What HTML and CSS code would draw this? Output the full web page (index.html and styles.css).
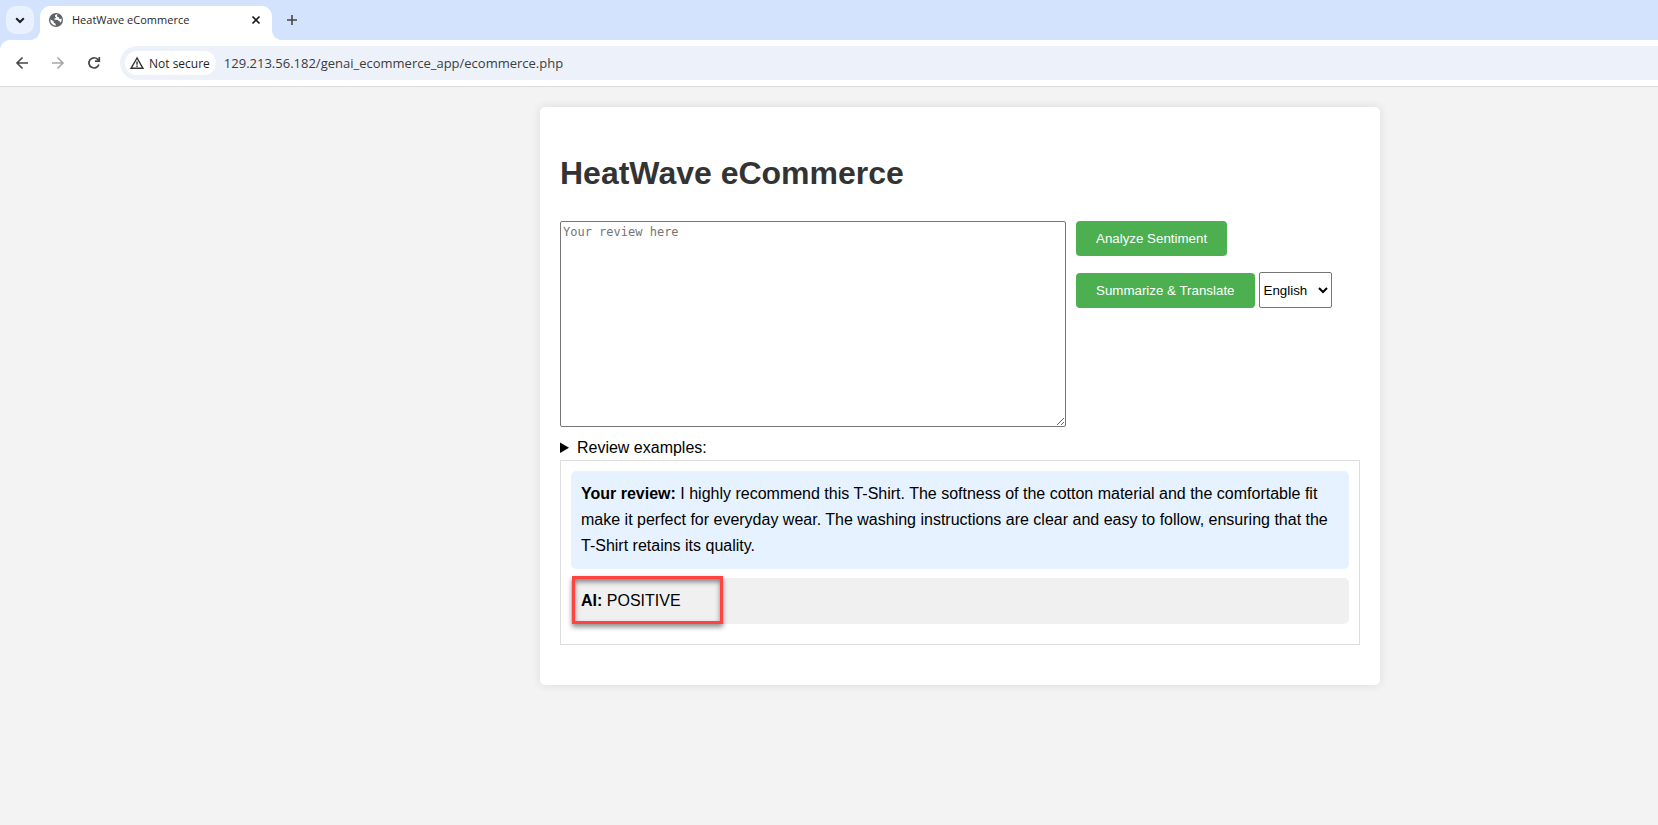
FILE: index.html
```html
<!DOCTYPE html>
<html lang="en">
<head>
<meta charset="utf-8">
<title>HeatWave eCommerce</title>
<link rel="stylesheet" href="styles.css">
</head>
<body>
<header class="browser">
  <div class="tabstrip">
    <button class="tab-search" type="button" aria-label="Search tabs">
      <svg width="10" height="10" viewBox="0 0 10 10" fill="none" stroke="#1f1f1f" stroke-width="2"><path d="M1.2 3.2 5 7l3.800-3.800"/></svg>
    </button>
    <div class="tab">
      <svg class="tab-icon" width="16" height="16" viewBox="0 0 16 16"><circle cx="8" cy="8" r="7" fill="#5f6368"/><path fill="#fff" d="M9.300 2.300c-2 .2-2.500 1-2.300 1.900.2.700 1 .7.900 1.500-.1.700-1.100.5-1.600 1-.3.400 0 .9.700 1h2.200c1 .1 1.100.9 1.700 1.500.5.400 1.200.2 1.500.7.200.6-.5 1.500-1.300 2.400A5.700 5.700 0 0 0 13.700 8c0-.5-.1-1-.2-1.400-.6.500-1.300.6-2 .2-.7-.5-.4-1.200-1-1.700-.500-.3-1.300-.2-1.500-.9-.1-.700.5-1.100.3-1.900zM2.400 7.200A5.700 5.700 0 0 0 7.500 13.700c.4-.5.400-1.300 0-1.900-.4-.5-1.300-.4-1.600-1-.3-.6 0-1.100-.5-1.700-.7-.900-1.900-.8-3-1.900z"/></svg>
      <span class="tab-title">HeatWave eCommerce</span>
      <button class="icon-button" type="button" aria-label="Close tab">
        <svg width="10" height="10" viewBox="0 0 10 10" stroke="#1f1f1f" stroke-width="1.700"><path d="m1.500 1.500 7 7m0-7-7 7"/></svg>
      </button>
    </div>
    <button class="icon-button new-tab" type="button" aria-label="New tab">
      <svg width="12" height="12" viewBox="0 0 12 12" stroke="#474747" stroke-width="1.600"><path d="M6 1v10M1 6h10"/></svg>
    </button>
  </div>
  <div class="toolbar">
    <nav class="nav">
      <button class="icon-button" type="button" aria-label="Back">
        <svg width="14" height="14" viewBox="0 0 14 14" fill="none" stroke="#474747" stroke-width="1.600"><path d="M13 7H2m5.500-5.500L2 7l5.500 5.500"/></svg>
      </button>
      <button class="icon-button" type="button" aria-label="Forward" disabled>
        <svg width="14" height="14" viewBox="0 0 14 14" fill="none" stroke="#a8a8a8" stroke-width="1.600"><path d="M1 7h11M6.500 1.500 12 7l-5.500 5.500"/></svg>
      </button>
      <button class="icon-button" type="button" aria-label="Reload">
        <svg width="14" height="14" viewBox="0 0 14 14" fill="none" stroke="#474747" stroke-width="1.700"><path d="M11.900 8.500A5.100 5.100 0 1 1 10.800 3.400L12.300 5"/><path d="M12.300 1v4.200H8"/></svg>
      </button>
    </nav>
    <div class="omnibox">
      <button class="security" type="button">
        <svg width="14" height="14" viewBox="0 0 14 14" fill="none" stroke="#333" stroke-width="1.400"><path d="M7 2 1 12.300h12z"/><path d="M7 5.500v3.300M7 9.600V11"/></svg>
        Not secure
      </button>
      <input class="url" type="text" aria-label="Address" value="129.213.56.182/genai_ecommerce_app/ecommerce.php">
    </div>
  </div>
</header>
<main class="page">
  <section class="card">
    <h1 class="title">HeatWave eCommerce</h1>
    <form class="review-form">
      <textarea class="review" aria-label="Your review" placeholder="Your review here"></textarea>
      <div class="actions">
        <button class="action" type="button">Analyze Sentiment</button>
        <div class="translate">
          <button class="action" type="button">Summarize &amp; Translate</button>
          <select class="language" aria-label="Language"><option>English</option></select>
        </div>
      </div>
    </form>
    <details class="examples">
      <summary>Review examples:</summary>
    </details>
    <div class="chat">
      <p class="message message-user"><strong>Your review:</strong> I highly recommend this T-Shirt. The softness of the cotton material and the comfortable fit make it perfect for everyday wear. The washing instructions are clear and easy to follow, ensuring that the T-Shirt retains its quality.</p>
      <p class="message message-ai"><strong>AI:</strong> POSITIVE<span class="highlight"></span></p>
    </div>
  </section>
</main>
</body>
</html>
```
FILE: styles.css
```css
* { box-sizing: border-box; }

body {
  margin: 0;
  min-height: 100vh;
  background: #f3f3f3;
  color: #000;
  font: 16px/26px "Liberation Sans", Arial, sans-serif;
}

button, input, select, textarea { margin: 0; font-family: inherit; }
svg { display: block; flex: none; }

/* Browser frame */
.browser {
  background: #d3e3fd;
  border-bottom: 1px solid #dcdcdc;
  font-family: "Open Sans", "Noto Sans", sans-serif;
}

.tabstrip {
  display: flex;
  align-items: center;
  height: 40px;
  padding: 6px 6px 0;
}

.tab-search {
  display: grid;
  place-items: center;
  align-self: flex-start;
  width: 28px;
  height: 28px;
  margin-right: 6px;
  padding: 0;
  border: 0;
  border-radius: 10px;
  background: #e9f1fe;
}

.tab {
  position: relative;
  display: flex;
  align-items: center;
  gap: 8px;
  width: 232px;
  height: 34px;
  padding: 0 6px 6px 8px;
  border-radius: 10px 10px 0 0;
  background: #fff;
}

/* Concave feet that join the active tab to the toolbar */
.tab::before,
.tab::after {
  content: "";
  position: absolute;
  bottom: 0;
  width: 10px;
  height: 10px;
}
.tab::before { right: 100%; background: radial-gradient(circle at 0 0, transparent 10px, #fff 10px); }
.tab::after { left: 100%; background: radial-gradient(circle at 100% 0, transparent 10px, #fff 10px); }

.tab-title {
  flex: 1;
  color: #1f1f1f;
  font-size: 11px;
  line-height: 16px;
  white-space: nowrap;
}

.icon-button {
  display: grid;
  place-items: center;
  width: 20px;
  height: 20px;
  padding: 0;
  border: 0;
  background: none;
}

.new-tab { margin: 0 0 6px 10px; }

.toolbar {
  display: flex;
  align-items: center;
  gap: 16px;
  height: 46px;
  padding-left: 12px;
  border-radius: 10px 0 0 0;
  background: #fff;
}

.nav { display: flex; gap: 16px; }

.omnibox {
  display: flex;
  flex: 1;
  align-items: center;
  gap: 8px;
  height: 34px;
  padding-left: 5px;
  border-radius: 17px 0 0 17px;
  background: #edf1fa;
}

.security {
  display: flex;
  align-items: center;
  gap: 5px;
  height: 24px;
  padding: 0 6px 0 5px;
  border: 0;
  border-radius: 12px;
  background: #fff;
  color: #1f1f1f;
  font-size: 12px;
  font-weight: 500;
  white-space: nowrap;
}

.url {
  flex: 1;
  min-width: 0;
  padding: 0;
  border: 0;
  background: none;
  color: #3c3c3c;
  font-size: 13px;
}

/* Page */
.page {
  display: grid;
  grid-template-columns: minmax(0, 540fr) minmax(0, 840px) minmax(0, 278fr);
  padding: 20px 0;
}

.card {
  grid-column: 2;
  padding: 20px 20px 40px;
  border-radius: 5px;
  background: #fff;
  box-shadow: 0 0 10px rgba(0, 0, 0, 0.1);
}

.title {
  margin: 20px 0 22px;
  color: #333;
  font-size: 32px;
  line-height: 52px;
}

.review-form {
  display: flex;
  align-items: flex-start;
  gap: 10px;
  margin-bottom: 9px;
}

.review {
  flex: 0 1 506px;
  min-width: 0;
  height: 206px;
  padding: 3px 2px;
  border: 1px solid #767676;
  border-radius: 2px;
  font: 12px/15px "DejaVu Sans Mono", monospace;
  resize: both;
}
.review::placeholder { color: #757575; }

.actions {
  display: flex;
  flex-direction: column;
  align-items: flex-start;
  gap: 16px;
}

.action {
  padding: 10px 20px;
  border: 0;
  border-radius: 4px;
  background: #4caf50;
  color: #fff;
  line-height: 15px;
  white-space: nowrap;
}

.translate { display: flex; align-items: flex-end; gap: 4px; }

.language {
  width: 73px;
  height: 36px;
  padding: 0;
  border: 1px solid #767676;
  border-radius: 2px;
  background: #fff;
  color: #000;
}

.examples { line-height: 24px; }

.chat {
  padding: 10px 10px 20px;
  border: 1px solid #ddd;
}

.message {
  margin: 0;
  padding: 10px;
  border-radius: 5px;
}
.message-user { margin-bottom: 9px; background: #e6f2ff; }
.message-ai { position: relative; background: #f0f0f0; }

.highlight {
  position: absolute;
  top: -2px;
  left: 1px;
  width: 151px;
  height: 48px;
  border: 3px solid #ff4343;
  box-shadow: 0 3px 5px rgba(0, 0, 0, 0.45), inset 0 3px 5px rgba(0, 0, 0, 0.45);
}
```
